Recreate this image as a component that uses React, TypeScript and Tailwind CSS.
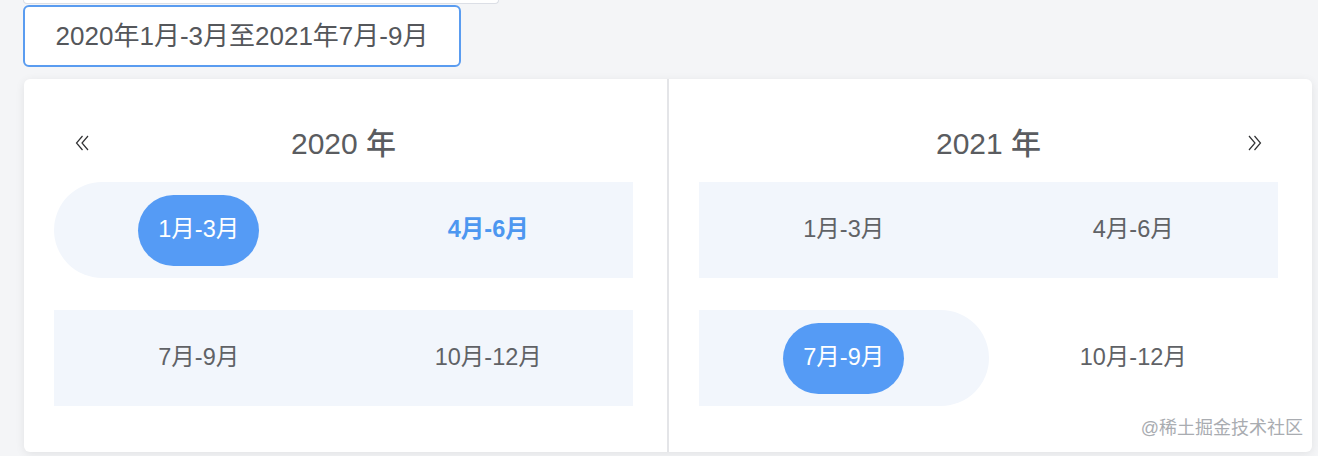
import React from "react";

type Cell = {
  label: string;
  inRange?: boolean;
  start?: boolean;
  end?: boolean;
  selected?: boolean;
  hover?: boolean;
};

const FONT = "font-['Liberation_Sans','Noto_Sans_CJK_SC',sans-serif]";

const DoubleLeft: React.FC = () => (
  <svg width="15" height="16" viewBox="0 0 15 16" fill="none" stroke="#303133" strokeWidth="1.2">
    <path d="M7.5 1 L1.5 8 L7.5 15" />
    <path d="M13 1 L7 8 L13 15" />
  </svg>
);

const DoubleRight: React.FC = () => (
  <svg width="15" height="16" viewBox="0 0 15 16" fill="none" stroke="#303133" strokeWidth="1.2">
    <path d="M2 1 L8 8 L2 15" />
    <path d="M7.5 1 L13.5 8 L7.5 15" />
  </svg>
);

const QuarterCell: React.FC<{ cell: Cell }> = ({ cell }) => {
  let bg = "";
  if (cell.inRange) {
    bg = "bg-[#f2f6fc]";
    if (cell.start) bg += " rounded-l-full";
    if (cell.end) bg += " rounded-r-full";
  }
  return (
    <div className={`flex items-center justify-center h-full ${bg}`}>
      {cell.selected ? (
        <span className="w-[121px] h-[71px] rounded-full bg-[#559bf5] text-white flex items-center justify-center">
          {cell.label}
        </span>
      ) : (
        <span className={cell.hover ? "text-[#4d97f0] font-bold" : "text-[#606266]"}>{cell.label}</span>
      )}
    </div>
  );
};

const Half: React.FC<{ year: number; rows: Cell[][]; side: "left" | "right" }> = ({ year, rows, side }) => (
  <div className="flex-1 pt-[25px] pl-[30px] pr-[34px]">
    <div className="grid grid-cols-[1fr_auto_1fr] items-center h-[78px]">
      <div className="pl-[21px] flex justify-start">{side === "left" && <DoubleLeft />}</div>
      <div className="text-[30px] font-medium text-[#5a5c60]">{year} 年</div>
      <div className="pr-[16px] flex justify-end">{side === "right" && <DoubleRight />}</div>
    </div>
    <div className="flex flex-col gap-[32px] text-[23.5px]">
      {rows.map((row, i) => (
        <div key={i} className="grid grid-cols-2 h-[96px]">
          {row.map((c) => (
            <QuarterCell key={c.label} cell={c} />
          ))}
        </div>
      ))}
    </div>
  </div>
);

export default function App() {
  const left: Cell[][] = [
    [
      { label: "1月-3月", inRange: true, start: true, selected: true },
      { label: "4月-6月", inRange: true, hover: true },
    ],
    [
      { label: "7月-9月", inRange: true },
      { label: "10月-12月", inRange: true },
    ],
  ];
  const right: Cell[][] = [
    [
      { label: "1月-3月", inRange: true },
      { label: "4月-6月", inRange: true },
    ],
    [
      { label: "7月-9月", inRange: true, end: true, selected: true },
      { label: "10月-12月" },
    ],
  ];

  return (
    <div className={`min-h-screen bg-[#f4f5f7] ${FONT}`}>
      <div className="ml-[23px] w-[476px] h-[4px] bg-white border border-t-0 border-[#dcdfe6] rounded-b-[4px]" />
      <div className="ml-[23px] mt-[1px] w-[438px] h-[62px] bg-white border-2 border-[#5a9cf0] rounded-[6px] flex items-center justify-center text-[26px] text-[#55575b]">
        2020年1月-3月至2021年7月-9月
      </div>
      <div className="relative ml-[24px] mt-[12px] w-[1288px] h-[373px] bg-white rounded-[6px] shadow-[0_2px_10px_rgba(0,0,0,0.08)] flex">
        <Half year={2020} rows={left} side="left" />
        <div className="w-[2px] bg-[#e4e5e8]" />
        <Half year={2021} rows={right} side="right" />
        <div className="absolute right-[9px] bottom-[10px] text-[18px] text-[#a9acb1]">@稀土掘金技术社区</div>
      </div>
    </div>
  );
}
